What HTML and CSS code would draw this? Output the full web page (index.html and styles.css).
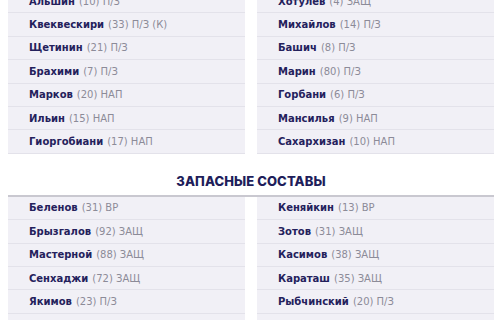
FILE: index.html
```html
<!DOCTYPE html>
<html lang="ru">
<head>
<meta charset="utf-8">
<link rel="stylesheet" href="styles.css">
</head>
<body>
<div class="page">
  <div class="lineup lineup-main">
    <ul class="col">
      <li class="row"><b>Альшин</b> <span>(10) П/З</span></li>
      <li class="row"><b>Квеквескири</b> <span>(33) П/З (К)</span></li>
      <li class="row"><b>Щетинин</b> <span>(21) П/З</span></li>
      <li class="row"><b>Брахими</b> <span>(7) П/З</span></li>
      <li class="row"><b>Марков</b> <span>(20) НАП</span></li>
      <li class="row"><b>Ильин</b> <span>(15) НАП</span></li>
      <li class="row"><b>Гиоргобиани</b> <span>(17) НАП</span></li>
    </ul>
    <ul class="col">
      <li class="row"><b>Хотулев</b> <span>(4) ЗАЩ</span></li>
      <li class="row"><b>Михайлов</b> <span>(14) П/З</span></li>
      <li class="row"><b>Башич</b> <span>(8) П/З</span></li>
      <li class="row"><b>Марин</b> <span>(80) П/З</span></li>
      <li class="row"><b>Горбани</b> <span>(6) П/З</span></li>
      <li class="row"><b>Мансилья</b> <span>(9) НАП</span></li>
      <li class="row"><b>Сахархизан</b> <span>(10) НАП</span></li>
    </ul>
  </div>
  <h2 class="title">ЗАПАСНЫЕ СОСТАВЫ</h2>
  <div class="lineup">
    <ul class="col">
      <li class="row"><b>Беленов</b> <span>(31) ВР</span></li>
      <li class="row"><b>Брызгалов</b> <span>(92) ЗАЩ</span></li>
      <li class="row"><b>Мастерной</b> <span>(88) ЗАЩ</span></li>
      <li class="row"><b>Сенхаджи</b> <span>(72) ЗАЩ</span></li>
      <li class="row"><b>Якимов</b> <span>(23) П/З</span></li>
      <li class="row"><b>Глушков</b> <span>(9) П/З</span></li>
    </ul>
    <ul class="col">
      <li class="row"><b>Кеняйкин</b> <span>(13) ВР</span></li>
      <li class="row"><b>Зотов</b> <span>(31) ЗАЩ</span></li>
      <li class="row"><b>Касимов</b> <span>(38) ЗАЩ</span></li>
      <li class="row"><b>Караташ</b> <span>(35) ЗАЩ</span></li>
      <li class="row"><b>Рыбчинский</b> <span>(20) П/З</span></li>
      <li class="row"><b>Гаджиев</b> <span>(11) П/З</span></li>
    </ul>
  </div>
</div>
</body>
</html>
```

FILE: styles.css
```css
html, body {
  margin: 0;
  padding: 0;
  background: #ffffff;
  overflow: hidden;
}
.page {
  width: 500px;
  height: 320px;
  overflow: hidden;
  padding: 0 6px 0 8px;
  box-sizing: border-box;
  font-family: "Inter", "Noto Sans", sans-serif;
}
.lineup {
  display: grid;
  grid-template-columns: 1fr 1fr;
  column-gap: 12px;
}
.lineup-main {
  margin-top: -10px;
}
.col {
  list-style: none;
  margin: 0;
  padding: 0;
}
.row {
  height: 23.4px;
  box-sizing: border-box;
  display: flex;
  align-items: center;
  padding-left: 21px;
  background: #f1f0f6;
  border-bottom: 1px solid #e3e2ea;
  font-family: "DejaVu Sans", "Noto Sans", sans-serif;
  font-size: 10px;
  white-space: nowrap;
  color: #8c8b98;
}
.row b {
  font-weight: 700;
  color: #24215c;
  margin-right: 4px;
}
.row span {
  font-weight: 400;
}
.title {
  margin: 0;
  padding: 19px 0 6px;
  text-align: center;
  font-size: 13px;
  font-weight: 800;
  letter-spacing: 0.1px;
  color: #201d5a;
  border-bottom: 2px solid #c9c8d0;
}
```
